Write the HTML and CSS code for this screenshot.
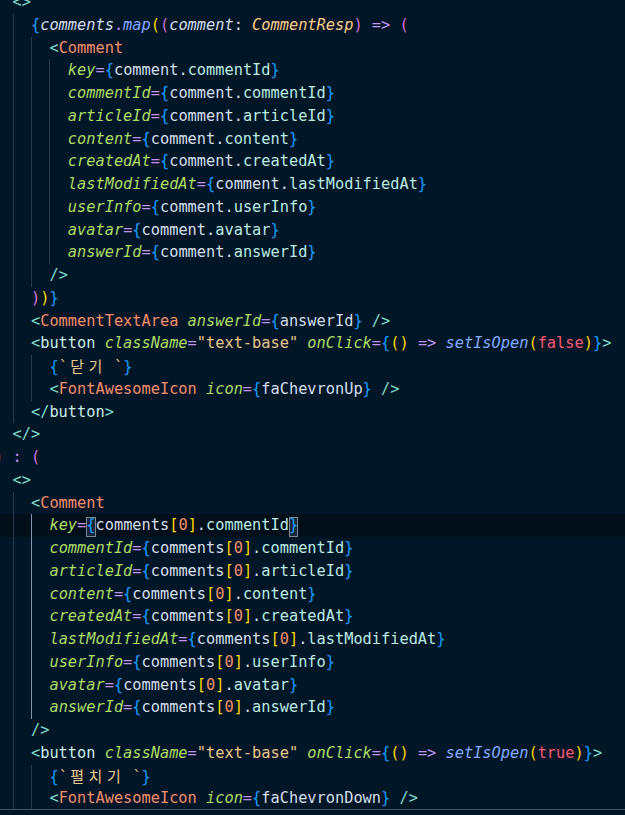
FILE: index.html
```html
<!DOCTYPE html>
<html lang="en">
<head>
    <meta charset="UTF-8">
    <title>Comment.tsx</title>
    <link rel="stylesheet" href="styles.css">
</head>
<body>
<div class="editor">
    <div class="lines">
        <div class="ln"><span class="ind"></span><span class="code"><span class="t">&lt;&gt;</span></span></div>
        <div class="ln"><span class="ind"></span><span class="ind"></span><span class="code"><span class="bl">{</span><span class="it">comments</span><span class="op">.</span><span class="fn">map</span><span class="y">(</span><span class="m">(</span><span class="it">comment</span>: <span class="ty">CommentResp</span><span class="m">)</span> <span class="op">=&gt;</span> <span class="m">(</span></span></div>
        <div class="ln"><span class="ind"></span><span class="ind"></span><span class="ind"></span><span class="code"><span class="t">&lt;</span><span class="cn">Comment</span></span></div>
        <div class="ln"><span class="ind"></span><span class="ind"></span><span class="ind"></span><span class="ind"></span><span class="code"><span class="at">key</span><span class="op">=</span><span class="bl">{</span>comment.<span class="p">commentId</span><span class="bl">}</span></span></div>
        <div class="ln"><span class="ind"></span><span class="ind"></span><span class="ind"></span><span class="ind"></span><span class="code"><span class="at">commentId</span><span class="op">=</span><span class="bl">{</span>comment.<span class="p">commentId</span><span class="bl">}</span></span></div>
        <div class="ln"><span class="ind"></span><span class="ind"></span><span class="ind"></span><span class="ind"></span><span class="code"><span class="at">articleId</span><span class="op">=</span><span class="bl">{</span>comment.<span class="p">articleId</span><span class="bl">}</span></span></div>
        <div class="ln"><span class="ind"></span><span class="ind"></span><span class="ind"></span><span class="ind"></span><span class="code"><span class="at">content</span><span class="op">=</span><span class="bl">{</span>comment.<span class="p">content</span><span class="bl">}</span></span></div>
        <div class="ln"><span class="ind"></span><span class="ind"></span><span class="ind"></span><span class="ind"></span><span class="code"><span class="at">createdAt</span><span class="op">=</span><span class="bl">{</span>comment.<span class="p">createdAt</span><span class="bl">}</span></span></div>
        <div class="ln"><span class="ind"></span><span class="ind"></span><span class="ind"></span><span class="ind"></span><span class="code"><span class="at">lastModifiedAt</span><span class="op">=</span><span class="bl">{</span>comment.<span class="p">lastModifiedAt</span><span class="bl">}</span></span></div>
        <div class="ln"><span class="ind"></span><span class="ind"></span><span class="ind"></span><span class="ind"></span><span class="code"><span class="at">userInfo</span><span class="op">=</span><span class="bl">{</span>comment.<span class="p">userInfo</span><span class="bl">}</span></span></div>
        <div class="ln"><span class="ind"></span><span class="ind"></span><span class="ind"></span><span class="ind"></span><span class="code"><span class="at">avatar</span><span class="op">=</span><span class="bl">{</span>comment.<span class="p">avatar</span><span class="bl">}</span></span></div>
        <div class="ln"><span class="ind"></span><span class="ind"></span><span class="ind"></span><span class="ind"></span><span class="code"><span class="at">answerId</span><span class="op">=</span><span class="bl">{</span>comment.<span class="p">answerId</span><span class="bl">}</span></span></div>
        <div class="ln"><span class="ind"></span><span class="ind"></span><span class="ind"></span><span class="code"><span class="t">/&gt;</span></span></div>
        <div class="ln"><span class="ind"></span><span class="ind"></span><span class="code"><span class="m">)</span><span class="y">)</span><span class="bl">}</span></span></div>
        <div class="ln"><span class="ind"></span><span class="ind"></span><span class="code"><span class="t">&lt;</span><span class="cn">CommentTextArea</span> <span class="at">answerId</span><span class="op">=</span><span class="bl">{</span>answerId<span class="bl">}</span> <span class="t">/&gt;</span></span></div>
        <div class="ln"><span class="ind"></span><span class="ind"></span><span class="code"><span class="t">&lt;</span><span class="ht">button</span> <span class="at">className</span><span class="op">=</span><span class="s">"text-base"</span> <span class="at">onClick</span><span class="op">=</span><span class="bl">{</span><span class="y">()</span> <span class="op">=&gt;</span> <span class="fn">setIsOpen</span><span class="y">(</span><span class="kw">false</span><span class="y">)</span><span class="bl">}</span><span class="t">&gt;</span></span></div>
        <div class="ln"><span class="ind"></span><span class="ind"></span><span class="ind"></span><span class="code"><span class="bl">{</span><span class="s">`<span class="ko">닫</span><span class="ko">기</span> `</span><span class="bl">}</span></span></div>
        <div class="ln"><span class="ind"></span><span class="ind"></span><span class="ind"></span><span class="code"><span class="t">&lt;</span><span class="cn">FontAwesomeIcon</span> <span class="at">icon</span><span class="op">=</span><span class="bl">{</span>faChevronUp<span class="bl">}</span> <span class="t">/&gt;</span></span></div>
        <div class="ln"><span class="ind"></span><span class="ind"></span><span class="code"><span class="t">&lt;/</span><span class="ht">button</span><span class="t">&gt;</span></span></div>
        <div class="ln"><span class="ind"></span><span class="code"><span class="t">&lt;/&gt;</span></span></div>
        <div class="ln"><span class="code"><span class="kw">)</span> <span class="op">:</span> <span class="m">(</span></span></div>
        <div class="ln"><span class="ind"></span><span class="code"><span class="t">&lt;&gt;</span></span></div>
        <div class="ln"><span class="ind"></span><span class="ind"></span><span class="code"><span class="t">&lt;</span><span class="cn">Comment</span></span></div>
        <div class="ln hl"><span class="ind"></span><span class="ind"></span><span class="ind act"></span><span class="code"><span class="at">key</span><span class="op">=</span><span class="bl mb">{</span>comments<span class="y">[</span><span class="n">0</span><span class="y">]</span>.<span class="p">commentId</span><span class="bl mb">}</span></span></div>
        <div class="ln"><span class="ind"></span><span class="ind"></span><span class="ind act"></span><span class="code"><span class="at">commentId</span><span class="op">=</span><span class="bl">{</span>comments<span class="y">[</span><span class="n">0</span><span class="y">]</span>.<span class="p">commentId</span><span class="bl">}</span></span></div>
        <div class="ln"><span class="ind"></span><span class="ind"></span><span class="ind act"></span><span class="code"><span class="at">articleId</span><span class="op">=</span><span class="bl">{</span>comments<span class="y">[</span><span class="n">0</span><span class="y">]</span>.<span class="p">articleId</span><span class="bl">}</span></span></div>
        <div class="ln"><span class="ind"></span><span class="ind"></span><span class="ind act"></span><span class="code"><span class="at">content</span><span class="op">=</span><span class="bl">{</span>comments<span class="y">[</span><span class="n">0</span><span class="y">]</span>.<span class="p">content</span><span class="bl">}</span></span></div>
        <div class="ln"><span class="ind"></span><span class="ind"></span><span class="ind act"></span><span class="code"><span class="at">createdAt</span><span class="op">=</span><span class="bl">{</span>comments<span class="y">[</span><span class="n">0</span><span class="y">]</span>.<span class="p">createdAt</span><span class="bl">}</span></span></div>
        <div class="ln"><span class="ind"></span><span class="ind"></span><span class="ind act"></span><span class="code"><span class="at">lastModifiedAt</span><span class="op">=</span><span class="bl">{</span>comments<span class="y">[</span><span class="n">0</span><span class="y">]</span>.<span class="p">lastModifiedAt</span><span class="bl">}</span></span></div>
        <div class="ln"><span class="ind"></span><span class="ind"></span><span class="ind act"></span><span class="code"><span class="at">userInfo</span><span class="op">=</span><span class="bl">{</span>comments<span class="y">[</span><span class="n">0</span><span class="y">]</span>.<span class="p">userInfo</span><span class="bl">}</span></span></div>
        <div class="ln"><span class="ind"></span><span class="ind"></span><span class="ind act"></span><span class="code"><span class="at">avatar</span><span class="op">=</span><span class="bl">{</span>comments<span class="y">[</span><span class="n">0</span><span class="y">]</span>.<span class="p">avatar</span><span class="bl">}</span></span></div>
        <div class="ln"><span class="ind"></span><span class="ind"></span><span class="ind act"></span><span class="code"><span class="at">answerId</span><span class="op">=</span><span class="bl">{</span>comments<span class="y">[</span><span class="n">0</span><span class="y">]</span>.<span class="p">answerId</span><span class="bl">}</span></span></div>
        <div class="ln"><span class="ind"></span><span class="ind"></span><span class="code"><span class="t">/&gt;</span></span></div>
        <div class="ln"><span class="ind"></span><span class="ind"></span><span class="code"><span class="t">&lt;</span><span class="ht">button</span> <span class="at">className</span><span class="op">=</span><span class="s">"text-base"</span> <span class="at">onClick</span><span class="op">=</span><span class="bl">{</span><span class="y">()</span> <span class="op">=&gt;</span> <span class="fn">setIsOpen</span><span class="y">(</span><span class="kw">true</span><span class="y">)</span><span class="bl">}</span><span class="t">&gt;</span></span></div>
        <div class="ln"><span class="ind"></span><span class="ind"></span><span class="ind"></span><span class="code"><span class="bl">{</span><span class="s">`<span class="ko">펼</span><span class="ko">치</span><span class="ko">기</span> `</span><span class="bl">}</span></span></div>
        <div class="ln"><span class="ind"></span><span class="ind"></span><span class="ind"></span><span class="code"><span class="t">&lt;</span><span class="cn">FontAwesomeIcon</span> <span class="at">icon</span><span class="op">=</span><span class="bl">{</span>faChevronDown<span class="bl">}</span> <span class="t">/&gt;</span></span></div>
    </div>
</div>
<div class="panel"></div>
</body>
</html>
```

FILE: styles.css
```css
:root{--cw:9.22px;}
body{margin:0;background:#011627;overflow:hidden;}
.editor{height:809px;overflow:hidden;border-bottom:1px solid #3b5165;font:15.31px/22.75px "DejaVu Sans Mono","Noto Sans CJK KR",monospace;color:#d6deeb;}
.lines{margin:-9px 0 0 -5.9px;}
.ln{display:flex;height:22.75px;white-space:pre;}
.ln.hl{background:#010f1b;}
.ind{flex:none;width:calc(var(--cw)*2);box-shadow:inset 1px 0 0 #233a50;}
.ind.act{box-shadow:inset 1px 0 0 #7e97ac;}
.code{flex:none;}
.t{color:#7fdbca;}
.cn{color:#f78c6c;}
.ht{color:#caece6;}
.at{color:#addb67;font-style:italic;}
.op{color:#c792ea;}
.s{color:#ecc48d;}
.y{color:#ffd700;}
.m{color:#da70d6;}
.bl{color:#179fff;}
.fn{color:#82aaff;font-style:italic;}
.kw{color:#ff5874;}
.n{color:#f78c6c;}
.p{color:#baebe2;}
.ty{color:#ffcb8b;font-style:italic;}
.it{font-style:italic;}
.ko{display:inline-block;width:calc(var(--cw)*2);text-align:center;font-family:"Noto Sans CJK KR",sans-serif;font-size:15px;}
.mb{display:inline-block;line-height:17.25px;padding-bottom:2.75px;background:#16283a;box-shadow:inset 0 0 0 1px #7d8a96;}
.panel{height:5px;background:#011627;}
```
